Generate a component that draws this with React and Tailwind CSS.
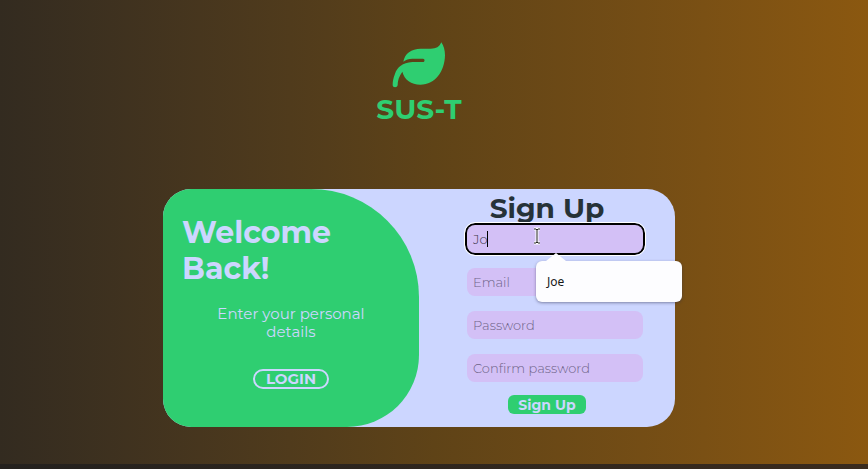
import React from "react";

const fieldClass =
  "block h-7 w-full rounded-lg bg-[#d3c0f6] px-1.5 text-[13px] font-light text-[#3c3548] placeholder:text-[#6f6488] placeholder:opacity-100 outline-none";

function Logo() {
  return (
    <header className="flex flex-col items-center text-[#2fce71]">
      <svg className="h-12 w-14" viewBox="96 32 168 144" fill="currentColor" aria-hidden="true">
        <path d="M247 36C241 50 232 55 215 55H185C157 55 137 70 133 94C140 88 150 85 160 85H192C198 85 198 95 192 95H160C130 98 115 110 108 130C102 145 101 155 101 164C101 173 115 173 116 164C116 150 120 138 130 124C136 148 157 163 184 163C230 163 257 122 258 75C258 60 254 46 247 36Z" />
      </svg>
      <h1 className="mt-1 text-[28px] leading-8 font-bold">SUS-T</h1>
    </header>
  );
}

function WelcomePanel() {
  return (
    <section className="flex w-1/2 flex-col items-center rounded-l-[28px] rounded-tr-[108px] rounded-br-[72px] bg-[#2fce71] px-[19px] pt-[26px] text-[#ccd6ff]">
      <h2 className="w-full text-[30px] leading-9 font-bold">
        Welcome
        <br />
        Back!
      </h2>
      <p className="mt-[18px] w-40 text-center text-[15px] leading-[18px] font-normal">
        Enter your personal details
      </p>
      <button
        type="button"
        className="mt-7 flex h-5 w-[76px] items-center justify-center rounded-full border-2 border-[#ccd6ff] text-[15px] leading-4 font-bold"
      >
        LOGIN
      </button>
    </section>
  );
}

function Suggestions() {
  return (
    <div className="absolute top-9 left-[69px] z-10 w-[146px]">
      <svg className="absolute -top-2 left-2.5 h-2 w-5" viewBox="0 0 20 8" fill="#fdfdff" aria-hidden="true">
        <path d="M0 8L10 0L20 8Z" />
      </svg>
      <div className="flex h-[41px] items-center rounded-md bg-[#fdfdff] px-[11px] font-['Noto_Sans',sans-serif] text-[12px] text-[#171717] shadow-[0_1px_3px_rgba(50,50,80,0.5)]">
        Joe
      </div>
    </div>
  );
}

function SignUpForm() {
  return (
    <form className="flex w-1/2 flex-col items-center" onSubmit={(e) => e.preventDefault()}>
      <h2 className="mt-0.5 text-[28px] leading-[34px] font-bold text-[#263238]">Sign Up</h2>
      <div className="ml-4 flex w-44 flex-col gap-[15px]">
        <div className="relative">
          <input
            aria-label="Name"
            defaultValue="Jo"
            className={`${fieldClass} ring-2 ring-black outline-1 outline-offset-2 outline-white outline-solid`}
          />
          <span className="absolute top-1.5 left-5 h-4 w-px bg-black" />
          <svg className="absolute top-0.5 left-[66px] h-[18px] w-2" viewBox="0 0 8 18" fill="none" aria-hidden="true">
            <path d="M1 2H3L4 3L5 2H7M4 3V15M1 16H3L4 15L5 16H7" stroke="white" strokeWidth="3" />
            <path d="M1 2H3L4 3L5 2H7M4 3V15M1 16H3L4 15L5 16H7" stroke="#222" />
          </svg>
          <Suggestions />
        </div>
        <input aria-label="Email" type="email" placeholder="Email" className={fieldClass} />
        <input aria-label="Password" type="password" placeholder="Password" className={fieldClass} />
        <input aria-label="Confirm password" type="password" placeholder="Confirm password" className={fieldClass} />
      </div>
      <button
        type="submit"
        className="mt-[13px] flex h-[19px] w-[78px] items-center justify-center rounded-md bg-[#2fce71] text-[14px] leading-4 font-bold text-[#ccd6ff]"
      >
        Sign Up
      </button>
    </form>
  );
}

export default function App() {
  return (
    <div className="flex min-h-screen flex-col bg-linear-to-r from-[#332b20] via-[#5f4317] to-[#8b5810] font-[Montserrat,Inter,sans-serif]">
      <main className="flex flex-1 flex-col items-center pt-[41px] pr-[30px] pb-9">
        <Logo />
        <div className="mt-16 flex min-h-[238px] w-full max-w-lg rounded-[28px] bg-[#ccd6ff]">
          <WelcomePanel />
          <SignUpForm />
        </div>
      </main>
      <footer className="h-[5px] bg-linear-to-r from-[#24211e] to-[#3a2b1e]" />
    </div>
  );
}
